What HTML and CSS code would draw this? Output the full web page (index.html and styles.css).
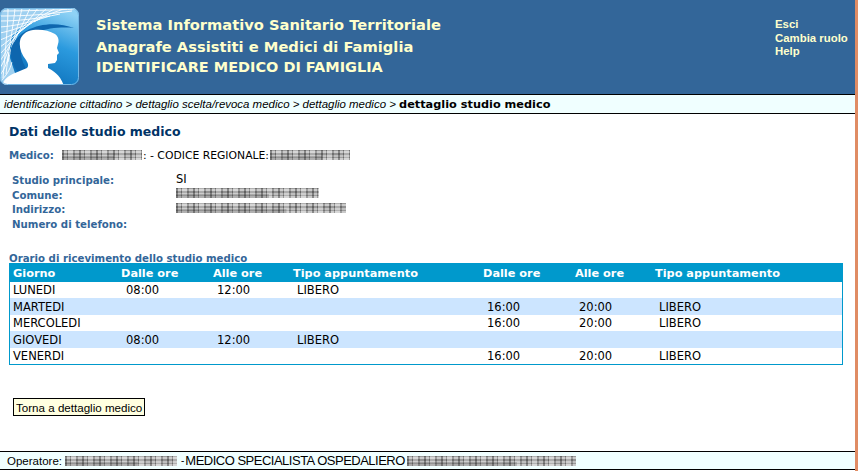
FILE: index.html
```html
<!DOCTYPE html>
<html lang="it">
<head>
<meta charset="utf-8">
<title>Sistema Informativo Sanitario Territoriale</title>
<link rel="stylesheet" href="styles.css">
</head>
<body>
<div class="page">
  <header class="header">
    <svg class="logo" viewBox="0 0 80 78" width="80" height="78" aria-hidden="true">
      <defs>
        <linearGradient id="sky" x1="0.95" y1="0.1" x2="0.55" y2="1">
          <stop offset="0" stop-color="#8fd2f5"/>
          <stop offset="0.45" stop-color="#2b9ade"/>
          <stop offset="1" stop-color="#0c70ba"/>
        </linearGradient>
        <clipPath id="round"><rect x="0" y="0" width="79" height="77" rx="7"/></clipPath>
      </defs>
      <g clip-path="url(#round)">
        <rect width="80" height="78" fill="url(#sky)"/>
        <path d="M0 0H79L72 3C45 6 22 13 11 30L8 44L16 68L0 78Z" fill="#9fd0f0"/>
        <g stroke="#fff" stroke-width="0.9" fill="none">
          <path d="M0 3C25 3 55 2 76 1M0 8C22 8 45 7 72 3M0 13C18 13 36 11 60 6M0 19C14 18 28 15 50 8M0 25C10 23 20 20 40 11M0 32C8 29 14 26 32 15M0 39C6 35 10 31 25 20M0 46C5 41 8 37 18 26M0 53C4 47 8 41 13 32M0 60C4 54 7 46 10 38M0 67C5 61 8 52 9 44M0 74C6 68 10 62 12 54"/>
          <path d="M8 0C8 15 6 35 3 70M15 0C14 14 10 32 6 66M22 0C20 12 14 28 8 54M30 0C26 10 18 24 10 44M38 0C32 9 22 20 13 32M47 0C40 7 28 16 18 26M56 0C47 5 35 11 25 20M66 0C56 4 44 7 34 14"/>
        </g>
        <path d="M74 20C50 11 20 18 11 40C9 50 14 62 24 70L30 66C22 56 19 46 22 36C28 24 50 18 74 20Z" fill="#0e66ae"/>
        <path d="M2 78C3 72 8 68 15 65L27 60C29 58 28 55 26 52C21 46 19 39 20 33C21 27 26 23 33 22C40 21 49 22 55 26C59 29 59 33 58 36L57 40L59 45L57 47L57 52L55 55L48 56L48 60C53 63 60 66 64 78Z" fill="#fff"/>
      </g>
      <rect x="0.5" y="0.5" width="78" height="76" rx="7" fill="none" stroke="#74b7e4"/>
    </svg>
    <div class="titles">
      <div class="title-1">Sistema Informativo Sanitario Territoriale</div>
      <div class="title-2">Anagrafe Assistiti e Medici di Famiglia</div>
      <div class="title-3">IDENTIFICARE MEDICO DI FAMIGLIA</div>
    </div>
    <nav class="links">
      <a>Esci</a>
      <a>Cambia ruolo</a>
      <a>Help</a>
    </nav>
  </header>
  <div class="crumbs"><i>identificazione cittadino &gt; dettaglio scelta/revoca medico &gt; dettaglio medico &gt; </i><b>dettaglio studio medico</b></div>
  <main class="content">
    <h1 class="heading">Dati dello studio medico</h1>
    <div class="medico">
      <span class="label">Medico:</span>
      <span class="redact r-80"></span><span class="plain">: - CODICE REGIONALE:</span><span class="redact r-80"></span>
    </div>
    <div class="fields">
      <span class="label">Studio principale:</span><span class="value">SI</span>
      <span class="label">Comune:</span><span class="redact r-143"></span>
      <span class="label">Indirizzo:</span><span class="redact r-170"></span>
      <span class="label">Numero di telefono:</span><span></span>
    </div>
    <div class="caption">Orario di ricevimento dello studio medico</div>
    <table class="hours">
      <thead>
        <tr><th>Giorno</th><th>Dalle ore</th><th>Alle ore</th><th>Tipo appuntamento</th><th>Dalle ore</th><th>Alle ore</th><th>Tipo appuntamento</th></tr>
      </thead>
      <tbody>
        <tr><td>LUNEDI</td><td>08:00</td><td>12:00</td><td>LIBERO</td><td></td><td></td><td></td></tr>
        <tr class="alt"><td>MARTEDI</td><td></td><td></td><td></td><td>16:00</td><td>20:00</td><td>LIBERO</td></tr>
        <tr><td>MERCOLEDI</td><td></td><td></td><td></td><td>16:00</td><td>20:00</td><td>LIBERO</td></tr>
        <tr class="alt"><td>GIOVEDI</td><td>08:00</td><td>12:00</td><td>LIBERO</td><td></td><td></td><td></td></tr>
        <tr><td>VENERDI</td><td></td><td></td><td></td><td>16:00</td><td>20:00</td><td>LIBERO</td></tr>
      </tbody>
    </table>
    <button class="back" type="button">Torna a dettaglio medico</button>
  </main>
  <footer class="footer">
    <span class="op">Operatore:</span><span class="redact r-112"></span><span class="dash">-</span><span class="role">MEDICO SPECIALISTA OSPEDALIERO</span><span class="redact r-169"></span>
  </footer>
</div>
</body>
</html>
```
FILE: styles.css
```css
html, body { margin: 0; padding: 0; background: #fff; }
.page { width: 855px; height: 471px; display: flex; flex-direction: column; border-right: 3px solid #e08c64; overflow: hidden; }
.header { height: 94px; flex: none; background: #336699; display: flex; align-items: flex-start; box-sizing: border-box; padding-top: 8px; }
.logo { display: block; flex: none; }
.titles { margin-left: 16px; padding-top: 6px; font-family: "DejaVu Sans", sans-serif; font-weight: bold; color: #ffffcc; width: 679px; flex: none; }
.title-1 { font-size: 14.66px; line-height: 22px; }
.title-2 { font-size: 14.7px; line-height: 22px; }
.title-3 { font-size: 14.47px; line-height: 18px; }
.links { display: flex; flex-direction: column; padding-top: 10px; font-family: "Liberation Sans", sans-serif; font-size: 11.4px; font-weight: bold; line-height: 13.5px; color: #ffffcc; }
.crumbs { height: 18px; flex: none; border-top: 1px solid #000; border-bottom: 1px solid #000; background: #f0ffff; font-family: "Liberation Sans", sans-serif; font-size: 11.46px; line-height: 18px; padding-left: 4px; color: #000; }
.crumbs b { font-family: "DejaVu Sans", sans-serif; font-size: 11.3px; }
.content { flex: 1; padding: 10px 0 0 9px; display: flex; flex-direction: column; align-items: flex-start; }
.heading { margin: 0; font-family: "DejaVu Sans", sans-serif; font-size: 12.5px; line-height: 16px; font-weight: bold; color: #003366; }
.label { font-family: "DejaVu Sans", sans-serif; font-weight: bold; font-size: 10.2px; color: #336699; }
.plain { font-family: "DejaVu Sans", sans-serif; font-size: 10.8px; color: #000; }
.value { font-family: "DejaVu Sans", sans-serif; font-size: 11.5px; color: #000; margin-bottom: 3px; }
.medico { display: flex; align-items: center; height: 14px; margin-top: 8px; margin-bottom: -1px; }
.medico .label { margin-right: 8px; }
.medico .plain { margin: 0 1px; }
.fields { display: grid; grid-template-columns: 164px 1fr; margin: 12px 0 0 3px; grid-auto-rows: 14.7px; align-items: center; }
.fields .redact { margin-bottom: 4px; }
.caption { margin-top: 22px; font-family: "DejaVu Sans", sans-serif; font-weight: bold; font-size: 10.2px; line-height: 9px; color: #336699; }
.hours { border-collapse: collapse; width: 834px; table-layout: fixed; border: 1px solid #0099cc; font-family: "DejaVu Sans", sans-serif; font-size: 11.5px; color: #000; }
.hours th { background: #0099cc; color: #fff; font-size: 11.3px; font-weight: bold; text-align: left; height: 16px; padding: 2px 0 0 3px; }
.hours td { height: 16.5px; padding: 0 0 0 3px; white-space: nowrap; }
.hours th:nth-child(1) { width: 106px; }
.hours th:nth-child(2) { width: 89px; padding-left: 2px; }
.hours th:nth-child(3) { width: 77px; }
.hours th:nth-child(4) { width: 187px; }
.hours th:nth-child(5) { width: 89px; }
.hours th:nth-child(6) { width: 77px; }
.hours td:nth-child(n+2) { padding-left: 7px; }
.hours .alt td { background: #cce5ff; }
.back { margin: 33px 0 0 4px; padding: 0 2px; height: 18px; border: 1px solid #000; background: #ffffe0; font-family: "Liberation Sans", sans-serif; font-size: 11.6px; color: #000; }
.footer { height: 17px; flex: none; margin-bottom: 1px; border-top: 1px solid #000; border-bottom: 1px solid #000; background: #f0ffff; display: flex; align-items: center; padding-left: 7px; font-family: "Liberation Sans", sans-serif; color: #000; }
.op { font-size: 11.5px; margin-right: 3px; }
.dash { font-size: 10px; margin: 0 1px 0 4px; }
.role { font-size: 13px; letter-spacing: -0.5px; margin-right: 2px; }
.redact { display: inline-block; flex: none; height: 10px; background-color: #a9a9a9; background-image: linear-gradient(rgba(0,0,0,0) 60%, rgba(40,40,40,.22) 60%), repeating-linear-gradient(90deg, rgba(50,50,50,.4) 0 2px, rgba(255,255,255,.2) 2px 5px, rgba(30,30,30,.25) 5px 6px, rgba(255,255,255,.35) 6px 11px, rgba(70,70,70,.3) 11px 13px, rgba(255,255,255,.15) 13px 17px), repeating-linear-gradient(0deg, rgba(255,255,255,.28) 0 2px, rgba(0,0,0,.2) 2px 3px, rgba(255,255,255,.12) 3px 5px, rgba(0,0,0,.25) 5px 7px); background-size: 65% 100%, auto, auto; background-repeat: no-repeat, repeat, repeat; }
.r-80 { width: 80px; }
.r-112 { width: 112px; }
.r-143 { width: 143px; }
.r-169 { width: 169px; }
.r-170 { width: 170px; }
```
